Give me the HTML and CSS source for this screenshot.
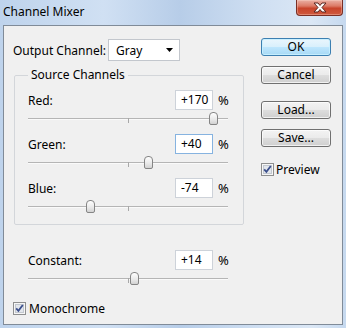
FILE: index.html
```html
<!DOCTYPE html>
<html>
<head>
<meta charset="utf-8">
<link rel="stylesheet" href="styles.css">
</head>
<body>
<div class="window">
  <div class="titlebar">
    <span class="title">Channel Mixer</span>
    <div class="close">
      <svg width="18" height="11" viewBox="0 0 18 11"><path d="M3 1 H7 L9 3.5 L11 1 H15 L11 5.5 L15 10 H11 L9 7.5 L7 10 H3 L7 5.5 Z" fill="#ffffff" stroke="#5a2620" stroke-width="1" stroke-linejoin="round"/></svg>
    </div>
  </div>
  <div class="client">
    <div class="main">
      <div class="output-row">
        <span class="output-label">Output Channel:</span>
        <div class="select">
          <span>Gray</span>
          <svg class="arrow" width="8" height="5" viewBox="0 0 8 5"><path d="M0 0 H7 L3.5 4 Z" fill="#000"/></svg>
        </div>
      </div>
      <fieldset class="group">
        <legend>Source Channels</legend>
        <div class="channel">
          <div class="value-row">
            <span class="label">Red:</span>
            <span class="field">+170</span>
            <span class="pct">%</span>
          </div>
          <div class="slider">
            <div class="track"></div>
            <div class="tick"></div>
            <div class="thumb" style="left:181px"></div>
          </div>
        </div>
        <div class="channel">
          <div class="value-row">
            <span class="label">Green:</span>
            <span class="field focused">+40</span>
            <span class="pct">%</span>
          </div>
          <div class="slider">
            <div class="track"></div>
            <div class="tick"></div>
            <div class="thumb" style="left:116px"></div>
          </div>
        </div>
        <div class="channel">
          <div class="value-row">
            <span class="label">Blue:</span>
            <span class="field">-74</span>
            <span class="pct">%</span>
          </div>
          <div class="slider">
            <div class="track"></div>
            <div class="tick"></div>
            <div class="thumb" style="left:58px"></div>
          </div>
        </div>
      </fieldset>
      <div class="channel constant">
        <div class="value-row">
          <span class="label">Constant:</span>
          <span class="field">+14</span>
          <span class="pct">%</span>
        </div>
        <div class="slider">
          <div class="track"></div>
          <div class="tick"></div>
          <div class="thumb" style="left:102px"></div>
        </div>
      </div>
      <div class="check mono">
        <svg class="box" width="13" height="13" viewBox="0 0 13 13"><rect x="0.5" y="0.5" width="12" height="12" fill="#f6f6f6" stroke="#8e8f8f"/><rect x="2.5" y="2.5" width="8" height="8" fill="#e2e6ec" stroke="#c3c8cf"/><path d="M3.2 6.3 L5.4 8.8 L9.8 3" fill="none" stroke="#3b4f8c" stroke-width="1.8"/></svg>
        <span>Monochrome</span>
      </div>
    </div>
    <div class="side">
      <div class="btn default">OK</div>
      <div class="btn cancel">Cancel</div>
      <div class="btn load">Load...</div>
      <div class="btn save">Save...</div>
      <div class="check preview">
        <svg class="box" width="13" height="13" viewBox="0 0 13 13"><rect x="0.5" y="0.5" width="12" height="12" fill="#f6f6f6" stroke="#8e8f8f"/><rect x="2.5" y="2.5" width="8" height="8" fill="#e2e6ec" stroke="#c3c8cf"/><path d="M3.2 6.3 L5.4 8.8 L9.8 3" fill="none" stroke="#3b4f8c" stroke-width="1.8"/></svg>
        <span>Preview</span>
      </div>
    </div>
  </div>
</div>
</body>
</html>
```
FILE: styles.css
```css
* { box-sizing: border-box; }
html, body { margin: 0; padding: 0; }
body {
  width: 346px;
  height: 328px;
  overflow: hidden;
  font-family: "Noto Sans", "Liberation Sans", sans-serif;
  font-size: 12px;
  color: #000;
  background: #c3d7ee;
}
.window {
  width: 346px;
  height: 328px;
  display: flex;
  flex-direction: column;
  background: linear-gradient(to right, #bed3ec 0%, #d0e0f3 30%, #b7cde8 52%, #cfdff2 75%, #dbe7f5 90%, #c6d9ef 100%);
}
.titlebar {
  height: 25px;
  flex: none;
  display: flex;
  align-items: flex-start;
  padding-left: 3px;
}
.title {
  line-height: 24px;
  color: #000;
}
.close {
  margin-left: auto;
  margin-right: 3px;
  width: 47px;
  height: 16px;
  border: 1px solid #7a2f25;
  border-top: none;
  border-radius: 0 0 4px 4px;
  background: linear-gradient(#eab0a4 0%, #dc7a66 40%, #c8442b 55%, #cf5a3f 100%);
  box-shadow: inset 0 0 0 1px rgba(255, 220, 210, 0.35);
  display: flex;
  align-items: center;
  justify-content: center;
}
.client {
  flex: 1;
  margin: 0 3px 3px 3px;
  border: 1px solid #808b98;
  background: #f0f0f0;
  display: flex;
}
.main {
  flex: 1;
  padding: 13px 0 0 9px;
  display: flex;
  flex-direction: column;
}
.output-row {
  display: flex;
  align-items: center;
  height: 22px;
}
.output-label { width: 95px; }
.select {
  width: 72px;
  height: 22px;
  background: #fff;
  border: 1px solid #c3c7cd;
  display: flex;
  align-items: center;
  padding: 0 5px 0 7px;
}
.select span { flex: 1; }
.group {
  margin: 6px 0 0 1px;
  width: 230px;
  border: 1px solid #d3d6da;
  border-radius: 2px;
  padding: 7px 12px 2px 13px;
  min-width: 0;
}
.group legend {
  padding: 0 3px;
  line-height: 16px;
}
.channel {
  width: 203px;
  display: flex;
  flex-direction: column;
}
.value-row {
  display: flex;
  align-items: center;
  height: 20px;
}
.label { flex: 1; }
.field {
  width: 38px;
  height: 20px;
  background: #fff;
  border: 1px solid #cdd2d9;
  padding-left: 5px;
  line-height: 18px;
}
.field.focused { border-color: #86b3e0; }
.pct {
  width: 13px;
  margin-left: 5px;
  font-size: 13px;
}
.slider {
  position: relative;
  width: 200px;
  height: 24px;
}
.track {
  position: absolute;
  left: 0;
  right: 0;
  top: 8px;
  height: 2px;
  border-top: 1px solid #b5b5b5;
  border-bottom: 1px solid #fafafa;
}
.tick {
  position: absolute;
  left: 100px;
  top: 8px;
  width: 1px;
  height: 5px;
  background: #a8a8a8;
}
.thumb {
  position: absolute;
  top: 2px;
  width: 9px;
  height: 13px;
  border: 1px solid #858585;
  border-radius: 4px 4px 2px 2px;
  background: linear-gradient(#ffffff, #e8e8e8 60%, #d2d2d2);
}
.constant {
  margin: 25px 0 0 15px;
}
.check {
  display: flex;
  align-items: center;
  height: 13px;
}
.check .box { flex: none; margin-right: 3px; }
.mono { margin-top: 8px; margin-left: 0; }
.side {
  width: 70px;
  margin: 12px 11px 0 0;
  display: flex;
  flex-direction: column;
}
.btn {
  height: 18px;
  border: 1px solid #707070;
  border-radius: 3px;
  background: linear-gradient(#f3f3f3 0%, #ebebeb 48%, #dddddd 52%, #cfcfcf 100%);
  box-shadow: inset 0 0 0 1px rgba(255, 255, 255, 0.7);
  display: flex;
  align-items: center;
  justify-content: center;
  line-height: 16px;
}
.btn.default {
  border-color: #3c7fb1;
  background: linear-gradient(#eaf6fd 0%, #d9f0fc 48%, #bee6fd 52%, #a7d9f5 100%);
  box-shadow: inset 0 0 0 1px rgba(200, 240, 255, 0.9);
}
.cancel { margin-top: 10px; }
.load { margin-top: 17px; }
.save { margin-top: 10px; }
.preview { margin-top: 16px; }
.preview .box { margin-right: 2px; }
```
